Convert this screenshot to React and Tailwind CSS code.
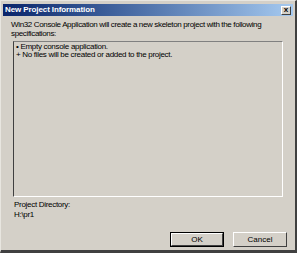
const font = { fontFamily: '"Liberation Sans", Arial, sans-serif' };

const Button = ({ label, isDefault }) => (
  <div className={`h-[15px] ${isDefault ? 'border border-black' : ''}`}>
    <div className="h-full border-t border-l border-white border-r border-b border-r-[#404040] border-b-[#404040] bg-[#d4d0c8] flex items-center justify-center text-[8px] text-black">
      {label}
    </div>
  </div>
);

export default function App() {
  return (
    <div className="w-[297px] h-[253px] bg-[#d4d0c8] border-t border-l border-t-[#e8e6e0] border-l-[#e8e6e0] border-r-2 border-b-[3px] border-r-[#404040] border-b-[#404040] flex flex-col" style={font}>
      <div className="mx-[2px] mt-[3px] h-[12px] flex items-center justify-between pl-[2px] pr-[2px] bg-gradient-to-r from-[#0a246a] to-[#a6caf0]">
        <span className="text-white font-bold text-[8px] leading-none tracking-[-0.1px]">New Project Information</span>
        <div className="w-[10px] h-[9px] bg-[#d4d0c8] border-t border-l border-white border-r border-b border-r-[#404040] border-b-[#404040] flex items-center justify-center text-[8px] font-bold leading-none text-black">
          x
        </div>
      </div>

      <div className="px-[10px] pt-[4px] text-[8px] leading-[9px] text-black tracking-[-0.35px] whitespace-nowrap">
        <p>Win32 Console Application will create a new skeleton project with the following</p>
        <p>specifications:</p>
      </div>

      <div className="mx-[12px] mt-[3px] h-[156px] border-t border-l border-t-[#808080] border-l-[#404040] border-r border-b border-r-white border-b-white px-[2px] pt-[1px] text-[8px] leading-[8px] text-black tracking-[-0.3px]">
        <div>• Empty console application.</div>
        <div>+ No files will be created or added to the project.</div>
      </div>

      <div className="px-[13px] pt-[3px] text-[8px] leading-[10px] text-black tracking-[-0.3px]">
        <div>Project Directory:</div>
        <div>H:\pr1</div>
      </div>

      <div className="flex-1" />
      <div className="flex justify-end gap-[9px] pr-[8px] pb-[3px]">
        <div className="w-[54px]"><Button label="OK" isDefault /></div>
        <div className="w-[54px]"><Button label="Cancel" /></div>
      </div>
    </div>
  );
}
